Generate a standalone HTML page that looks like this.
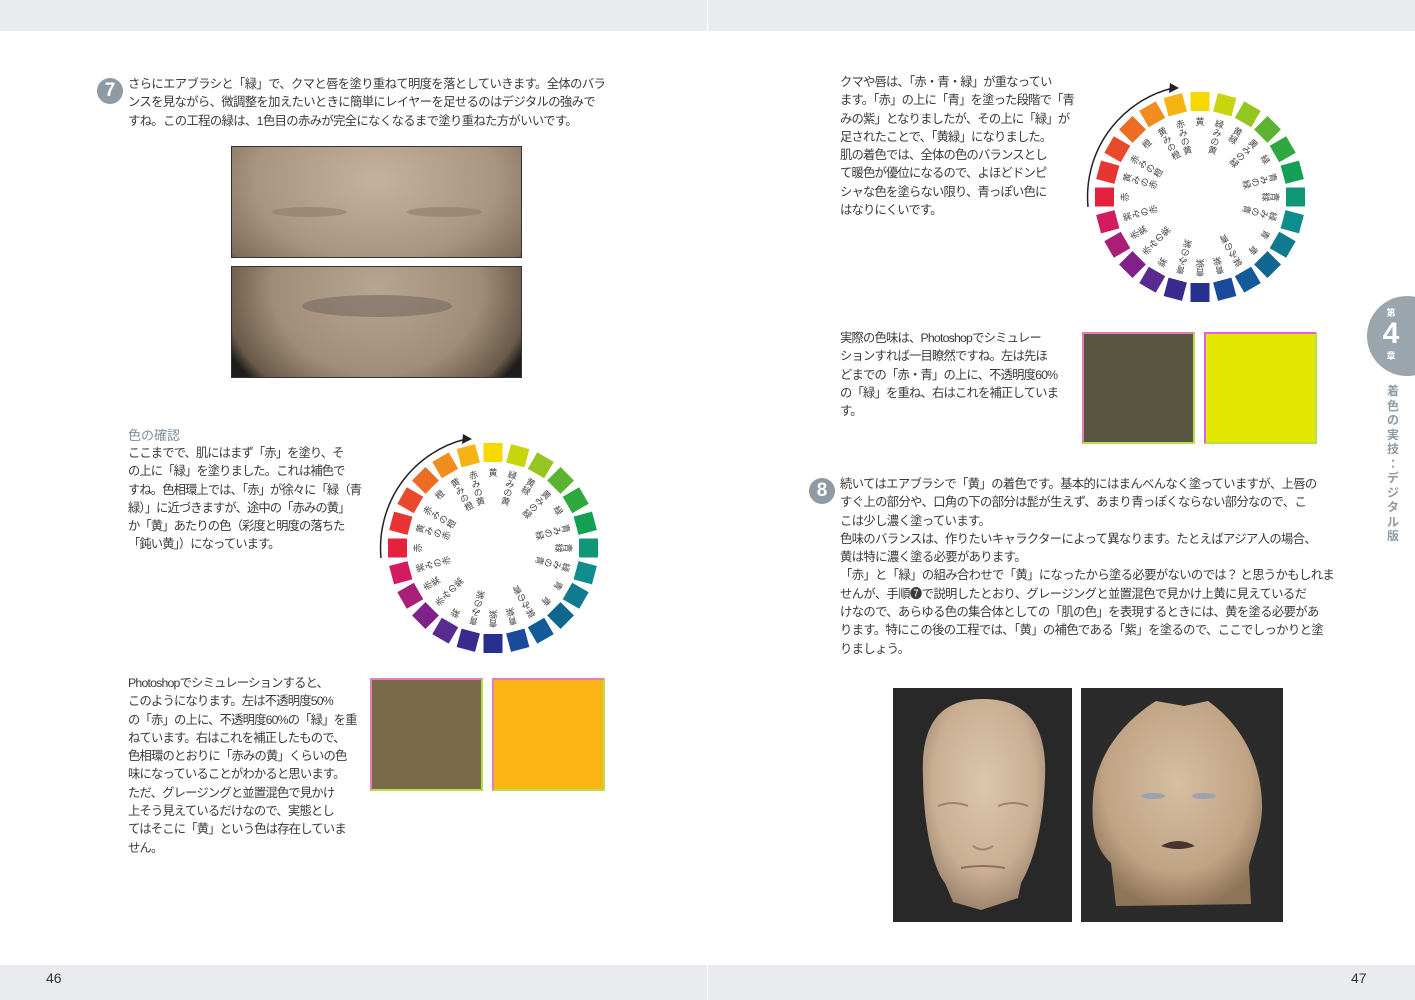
<!DOCTYPE html>
<html><head><meta charset="utf-8">
<style>
*{margin:0;padding:0;box-sizing:border-box}
body{width:1415px;height:1000px;background:#fff;position:relative;overflow:hidden;font-family:"Liberation Sans","Noto Sans CJK JP",sans-serif;color:#333}
.bar{position:absolute;left:0;width:1415px;background:#e9ebee}
.t{position:absolute;font-size:12.3px;line-height:18.3px;white-space:nowrap;color:#3a3a3a;letter-spacing:-0.55px}
.badge{position:absolute;width:26px;height:26px;border-radius:50%;background:#8f9ba4;color:#fff;font-weight:bold;font-size:19px;text-align:center;line-height:26px}
.sq{position:absolute}
</style></head><body>
<div class="bar" style="top:0;height:31px"></div>
<div class="bar" style="top:965px;height:35px"></div>
<div style="position:absolute;left:707px;top:0;width:1px;height:31px;background:#fff"></div>
<div style="position:absolute;left:707px;top:965px;width:1px;height:35px;background:#fff"></div>
<div style="position:absolute;left:46px;top:970px;font-size:14px">46</div>
<div style="position:absolute;left:1351px;top:970px;font-size:14px">47</div>

<div class="badge" style="left:97px;top:78px">7</div>
<div class="t" style="left:128px;top:75px;letter-spacing:-0.6px">さらにエアブラシと「緑」で、クマと唇を塗り重ねて明度を落としていきます。全体のバラ<br>ンスを見ながら、微調整を加えたいときに簡単にレイヤーを足せるのはデジタルの強みで<br>すね。この工程の緑は、1色目の赤みが完全になくなるまで塗り重ねた方がいいです。</div>

<div style="position:absolute;left:231px;top:146px;width:291px;height:112px;border:1px solid #333;background:radial-gradient(ellipse 70% 120% at 50% 30%,#c4b29e,#a8957f 60%,#7d6c5a 90%,#222 100%)">
<div style="position:absolute;left:40px;top:60px;width:75px;height:10px;border-radius:50%;background:#8e7d6b;opacity:.6"></div>
<div style="position:absolute;left:175px;top:60px;width:75px;height:10px;border-radius:50%;background:#8e7d6b;opacity:.6"></div></div>
<div style="position:absolute;left:231px;top:266px;width:291px;height:112px;border:1px solid #333;background:radial-gradient(ellipse 60% 130% at 50% 20%,#b8a591,#a08c77 60%,#6a5a4a 88%,#1e1e1e 96%)">
<div style="position:absolute;left:70px;top:28px;width:150px;height:22px;border-radius:50%;background:#7f6f66;opacity:.7"></div></div>

<div style="position:absolute;left:128px;top:425px;font-size:13px;color:#7d8f9b">色の確認</div>
<div class="t" style="left:128px;top:444px;letter-spacing:-0.9px">ここまでで、肌にはまず「赤」を塗り、そ<br>の上に「緑」を塗りました。これは補色で<br>すね。色相環上では、「赤」が徐々に「緑（青<br>緑）」に近づきますが、途中の「赤みの黄」<br>か「黄」あたりの色（彩度と明度の落ちた<br>「鈍い黄」）になっています。</div>

<svg style="position:absolute;left:0;top:0" width="1415" height="1000">
<defs>
<g id="w">
<rect x="-9.5" y="-105" width="19" height="19" fill="#f5d900"/>
<rect transform="rotate(15)" x="-9.5" y="-105" width="19" height="19" fill="#c8d40e"/>
<rect transform="rotate(30)" x="-9.5" y="-105" width="19" height="19" fill="#94c521"/>
<rect transform="rotate(45)" x="-9.5" y="-105" width="19" height="19" fill="#5bb331"/>
<rect transform="rotate(60)" x="-9.5" y="-105" width="19" height="19" fill="#2ea83f"/>
<rect transform="rotate(75)" x="-9.5" y="-105" width="19" height="19" fill="#13a054"/>
<rect transform="rotate(90)" x="-9.5" y="-105" width="19" height="19" fill="#119777"/>
<rect transform="rotate(105)" x="-9.5" y="-105" width="19" height="19" fill="#0f8d8c"/>
<rect transform="rotate(120)" x="-9.5" y="-105" width="19" height="19" fill="#107a8e"/>
<rect transform="rotate(135)" x="-9.5" y="-105" width="19" height="19" fill="#0f668f"/>
<rect transform="rotate(150)" x="-9.5" y="-105" width="19" height="19" fill="#125b9a"/>
<rect transform="rotate(165)" x="-9.5" y="-105" width="19" height="19" fill="#1a4a9c"/>
<rect transform="rotate(180)" x="-9.5" y="-105" width="19" height="19" fill="#26308e"/>
<rect transform="rotate(195)" x="-9.5" y="-105" width="19" height="19" fill="#3b2a8e"/>
<rect transform="rotate(210)" x="-9.5" y="-105" width="19" height="19" fill="#5a2a8f"/>
<rect transform="rotate(225)" x="-9.5" y="-105" width="19" height="19" fill="#7f2189"/>
<rect transform="rotate(240)" x="-9.5" y="-105" width="19" height="19" fill="#a81e78"/>
<rect transform="rotate(255)" x="-9.5" y="-105" width="19" height="19" fill="#d41b62"/>
<rect transform="rotate(270)" x="-9.5" y="-105" width="19" height="19" fill="#e5223e"/>
<rect transform="rotate(285)" x="-9.5" y="-105" width="19" height="19" fill="#e73533"/>
<rect transform="rotate(300)" x="-9.5" y="-105" width="19" height="19" fill="#e9492c"/>
<rect transform="rotate(315)" x="-9.5" y="-105" width="19" height="19" fill="#ec6c23"/>
<rect transform="rotate(330)" x="-9.5" y="-105" width="19" height="19" fill="#f08d1e"/>
<rect transform="rotate(345)" x="-9.5" y="-105" width="19" height="19" fill="#f6b414"/>
<path d="M-112 10 A112 112 0 0 1 -27 -109" fill="none" stroke="#222" stroke-width="1.5"/>
<path d="M-30 -114 L-21 -109 L-31 -104 Z" fill="#222"/>
<g font-size="9" fill="#444" writing-mode="tb" font-family="Noto Sans CJK JP,sans-serif">
<text x="0" y="-80">黄</text><text transform="rotate(15)" x="0" y="-80">緑みの黄</text><text transform="rotate(30)" x="0" y="-80">黄緑</text><text transform="rotate(45)" x="0" y="-80">黄みの緑</text><text transform="rotate(60)" x="0" y="-80">緑</text><text transform="rotate(75)" x="0" y="-80">青みの緑</text>
<text transform="rotate(90)" x="0" y="-80">青緑</text><text transform="rotate(105)" x="0" y="-80">緑みの青</text><text transform="rotate(120)" x="0" y="-80">青</text><text transform="rotate(135)" x="0" y="-80">青</text><text transform="rotate(150)" x="0" y="-80">紫みの青</text><text transform="rotate(165)" x="0" y="-80">青紫</text>
<text transform="rotate(180)" x="0" y="-80">青紫</text><text transform="rotate(195)" x="0" y="-80">青みの紫</text><text transform="rotate(210)" x="0" y="-80">紫</text><text transform="rotate(225)" x="0" y="-80">赤みの紫</text><text transform="rotate(240)" x="0" y="-80">赤紫</text><text transform="rotate(255)" x="0" y="-80">紫みの赤</text>
<text transform="rotate(270)" x="0" y="-80">赤</text><text transform="rotate(285)" x="0" y="-80">黄みの赤</text><text transform="rotate(300)" x="0" y="-80">赤みの橙</text><text transform="rotate(315)" x="0" y="-80">橙</text><text transform="rotate(330)" x="0" y="-80">黄みの橙</text><text transform="rotate(345)" x="0" y="-80">赤みの黄</text>
</g>
</g>
</defs>
<use href="#w" x="493" y="548"/>
<use href="#w" x="1200" y="197"/>
</svg>

<div class="t" style="left:128px;top:674px;letter-spacing:-0.8px">Photoshopでシミュレーションすると、<br>このようになります。左は不透明度50%<br>の「赤」の上に、不透明度60%の「緑」を重<br>ねています。右はこれを補正したもので、<br>色相環のとおりに「赤みの黄」くらいの色<br>味になっていることがわかると思います。<br>ただ、グレージングと並置混色で見かけ<br>上そう見えているだけなので、実態とし<br>てはそこに「黄」という色は存在していま<br>せん。</div>
<div class="sq" style="left:370px;top:678px;width:113px;height:113px;background:#7a6a4a;border:2px solid #e27fb8;border-right-color:#b6e04a;border-bottom-color:#b6e04a"></div>
<div class="sq" style="left:492px;top:678px;width:113px;height:113px;background:#fbb514;border:2px solid #e27fb8;border-right-color:#b6e04a;border-bottom-color:#b6e04a"></div>

<div class="t" style="left:840px;top:73px;letter-spacing:-0.8px">クマや唇は、「赤・青・緑」が重なってい<br>ます。「赤」の上に「青」を塗った段階で「青<br>みの紫」となりましたが、その上に「緑」が<br>足されたことで、「黄緑」になりました。<br>肌の着色では、全体の色のバランスとし<br>て暖色が優位になるので、よほどドンピ<br>シャな色を塗らない限り、青っぽい色に<br>はなりにくいです。</div>
<div class="t" style="left:840px;top:329px;letter-spacing:-0.8px">実際の色味は、Photoshopでシミュレー<br>ションすれば一目瞭然ですね。左は先ほ<br>どまでの「赤・青」の上に、不透明度60%<br>の「緑」を重ね、右はこれを補正していま<br>す。</div>
<div class="sq" style="left:1082px;top:332px;width:113px;height:112px;background:#5a5540;border:2px solid #e27fb8;border-right-color:#b6e04a;border-bottom-color:#b6e04a"></div>
<div class="sq" style="left:1204px;top:332px;width:113px;height:112px;background:#e3e800;border:2px solid #e05ee0;border-right-color:#b6e04a;border-bottom-color:#b6e04a"></div>

<div style="position:absolute;left:1367px;top:296px;width:80px;height:80px;border-radius:50%;background:#9aa5ad"></div>
<div style="position:absolute;left:1367px;top:306px;width:48px;text-align:center;color:#fff;font-weight:bold"><div style="font-size:9px">第</div><div style="font-size:30px;line-height:30px">4</div><div style="font-size:9px">章</div></div>
<div style="position:absolute;left:1386px;top:384px;width:14px;font-size:12px;line-height:14.5px;color:#8f9ba4;font-weight:bold;text-align:center">着<br>色<br>の<br>実<br>技<br>：<br>デ<br>ジ<br>タ<br>ル<br>版</div>

<div class="badge" style="left:809px;top:478px">8</div>
<div class="t" style="left:840px;top:475px;letter-spacing:-0.6px">続いてはエアブラシで「黄」の着色です。基本的にはまんべんなく塗っていますが、上唇の<br>すぐ上の部分や、口角の下の部分は髭が生えず、あまり青っぽくならない部分なので、こ<br>こは少し濃く塗っています。<br>色味のバランスは、作りたいキャラクターによって異なります。たとえばアジア人の場合、<br>黄は特に濃く塗る必要があります。<br>「赤」と「緑」の組み合わせで「黄」になったから塗る必要がないのでは？ と思うかもしれま<br>せんが、手順❼で説明したとおり、グレージングと並置混色で見かけ上黄に見えているだ<br>けなので、あらゆる色の集合体としての「肌の色」を表現するときには、黄を塗る必要があ<br>ります。特にこの後の工程では、「黄」の補色である「紫」を塗るので、ここでしっかりと塗<br>りましょう。</div>

<svg style="position:absolute;left:893px;top:688px" width="179" height="234">
<defs><radialGradient id="f1" cx="50%" cy="40%" r="60%"><stop offset="0" stop-color="#dcc6ad"/><stop offset=".7" stop-color="#c9ae93"/><stop offset="1" stop-color="#9e8670"/></radialGradient></defs>
<rect width="179" height="234" fill="#282828"/>
<path d="M90 11 C40 11 28 45 30 90 C31 140 40 180 52 195 L60 214 L88 222 L125 210 L128 195 C140 175 150 140 152 90 C154 45 140 11 90 11Z" fill="url(#f1)"/>
<path d="M45 118 Q60 112 75 118 M105 118 Q120 112 135 118" stroke="#9a826c" stroke-width="2" fill="none"/>
<path d="M80 158 Q90 165 100 158" stroke="#a08570" stroke-width="2" fill="none"/>
<path d="M68 180 Q90 176 112 180" stroke="#8a6f5c" stroke-width="2" fill="none"/>
</svg>
<svg style="position:absolute;left:1081px;top:688px" width="202" height="234">
<defs><radialGradient id="f2" cx="50%" cy="40%" r="62%"><stop offset="0" stop-color="#d6bea2"/><stop offset=".7" stop-color="#c0a385"/><stop offset="1" stop-color="#8e7458"/></radialGradient></defs>
<rect width="202" height="234" fill="#2b2b2b"/>
<path d="M75 13 L103 18 L127 13 C165 40 180 80 181 115 C182 140 172 160 168 178 L170 216 L35 218 L30 175 C14 160 10 140 12 110 C14 70 40 35 75 13Z" fill="url(#f2)"/>
<path d="M80 158 Q97 148 114 158 Q97 164 80 158Z" fill="#4a3430"/>
<ellipse cx="72" cy="108" rx="12" ry="3" fill="#9aa2ad"/><ellipse cx="123" cy="108" rx="12" ry="3" fill="#9aa2ad"/>
</svg>
</body></html>
